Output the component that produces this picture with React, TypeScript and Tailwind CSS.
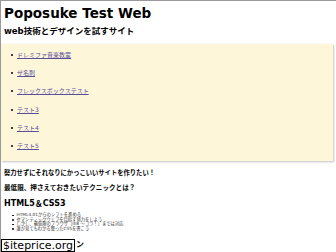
import React from 'react'

const links = ['ドレミファ音楽教室', 'ザ名刺', 'フレックスボックステスト', 'テスト3', 'テスト4', 'テスト5']

const points = [
  'HTML4.01からのシフトを進める',
  'セマンティックウェブを目指す努力をしよう',
  'しかし、最低限のブラウザ（IE8 〜コラ！）までは対応',
  '誰が見てもわかる整ったCSSを書こう',
]

export default function App(){
  const font = { fontFamily: '"DejaVu Sans", "Noto Sans CJK JP", sans-serif' }
  return (
    <div className="relative h-[252px] w-[336px] overflow-hidden border-l border-t border-[#9a9a9a] bg-white text-black" style={font}>
      <h1 className="pl-[3px] pt-[4px] text-[13.5px] font-bold leading-[16px]">Poposuke Test Web</h1>
      <p className="mt-[5px] pl-[3px] text-[8.5px] font-bold leading-[11px]">web技術とデザインを試すサイト</p>
      <ul className="mt-[7px] mr-[3px] h-[117px] bg-[#fdf6d9] pl-[10px] pt-[2px] shadow-[1px_1px_2px_rgba(0,0,0,0.25)]">
        {links.map(item => (
          <li key={item} className="flex h-[18.2px] items-center gap-[4px] text-[6px] leading-[8px]">
            <span className="h-[2px] w-[2px] rounded-full bg-black" />
            <a href="#" className="text-[#5a4f9a] underline">{item}</a>
          </li>
        ))}
      </ul>
      <h2 className="mt-[7px] pl-[3px] text-[6.3px] font-bold leading-[9px]">努力せずにそれなりにかっこいいサイトを作りたい！</h2>
      <h3 className="mt-[7px] pl-[3px] text-[6.6px] font-bold leading-[9px]">最低限、押さえておきたいテクニックとは？</h3>
      <h4 className="mt-[5px] pl-[3px] text-[8px] font-bold leading-[11px]">HTML5＆CSS3</h4>
      <ul className="mt-[4px] pl-[11px]">
        {points.map(item => (
          <li key={item} className="flex h-[4.5px] items-center gap-[3px] text-[4.3px] leading-[4.5px] text-[#333]">
            <span className="h-[1.5px] w-[1.5px] shrink-0 rounded-full bg-black" />
            <span className="whitespace-nowrap">{item}</span>
          </li>
        ))}
      </ul>
      <h4 className="mt-[8px] pl-[3px] text-[8px] font-bold leading-[11px]">レイアウトとデザイン</h4>
      <div className="absolute bottom-0 left-0 border border-black bg-white px-[1px] text-[11px] leading-[11px]" style={{ fontFamily: '"DejaVu Sans", sans-serif' }}>$iteprice.org</div>
    </div>
  )
}
